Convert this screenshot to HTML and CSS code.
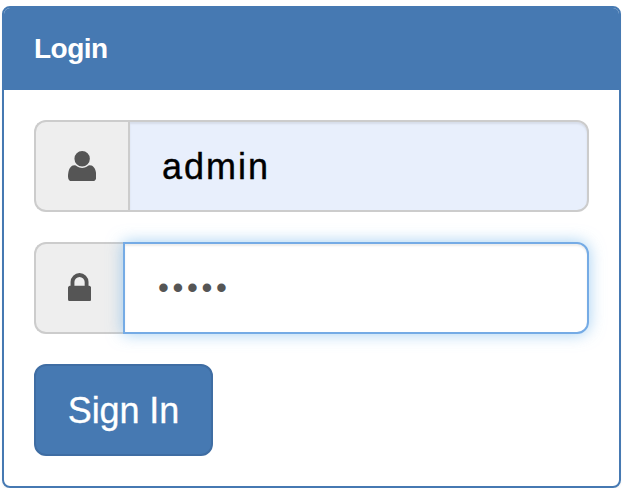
FILE: index.html
```html
<!DOCTYPE html>
<html lang="en">
<head>
<meta charset="utf-8">
<title>Login</title>
<link rel="stylesheet" href="styles.css">
</head>
<body>
<main class="panel">
  <h1 class="panel-heading">Login</h1>
  <form class="panel-body">
    <div class="input-group">
      <span class="addon">
        <svg class="icon-user" viewBox="0 0 1408 1536" aria-hidden="true"><g transform="translate(0 1408) scale(1 -1)"><path d="M1408 131q0 -120 -73 -189.500t-194 -69.500h-874q-121 0 -194 69.500t-73 189.500q0 53 3.500 103.500t14 109t26.500 108.500t43 97.500t62 81t85.500 53.500t111.500 20q9 0 42 -21.500t74.500 -48t108 -48t133.500 -21.500t133.500 21.500t108 48t74.500 48t42 21.500q61 0 111.500 -20t85.500 -53.500t62 -81t43 -97.500t26.500 -108.500t14 -109t3.500 -103.500zM1088 1024q0 -159 -112.500 -271.500t-271.500 -112.500t-271.500 112.500t-112.500 271.500t112.500 271.500t271.500 112.500t271.500 -112.500t112.500 -271.500z"/></g></svg>
      </span>
      <div class="field field-filled"><span class="username">admin</span></div>
    </div>
    <div class="input-group">
      <span class="addon addon-lock">
        <svg class="icon-lock" viewBox="0 0 1152 1408" aria-hidden="true"><g transform="translate(0 1408) scale(1 -1)"><path d="M320 768h512v192q0 106 -75 181t-181 75t-181 -75t-75 -181v-192zM1152 672v-576q0 -40 -28 -68t-68 -28h-960q-40 0 -68 28t-28 68v576q0 40 28 68t68 28h32v192q0 184 132 316t316 132t316 -132t132 -316v-192h32q40 0 68 -28t28 -68z"/></g></svg>
      </span>
      <div class="field field-focus"><span class="password">•••••</span></div>
    </div>
    <button class="submit" type="button">Sign In</button>
  </form>
</main>
</body>
</html>
```
FILE: styles.css
```css
* { box-sizing: border-box; }

body {
  margin: 0;
  padding: 6px 3px 0 2px;
  background: #fff;
  font-family: "Liberation Sans", Arial, sans-serif;
}

.panel {
  height: 482px;
  border: 2px solid #4679b2;
  border-radius: 8px;
  box-shadow: 0 2px 2px rgba(0, 0, 0, .05);
}

.panel-heading {
  margin: 0;
  height: 82px;
  padding: 0 30px;
  border-radius: 6px 6px 0 0;
  background: #4679b2;
  color: #fff;
  font-size: 28px;
  font-weight: bold;
  letter-spacing: -.5px;
  line-height: 82px;
}

.panel-body {
  display: flex;
  flex-direction: column;
  align-items: flex-start;
  gap: 30px;
  padding: 30px;
}

.input-group {
  display: flex;
  width: 555px;
  height: 92px;
}

.addon {
  display: flex;
  align-items: center;
  width: 94px;
  padding-left: 32px;
  border: 2px solid #ccc;
  border-right: 0;
  border-radius: 12px 0 0 12px;
  background: #eee;
}

.addon-lock { width: 89px; }

.addon svg {
  display: block;
  fill: #555;
}

.icon-user { width: 28.3px; height: 30.9px; }

.icon-lock { width: 23.1px; height: 28.3px; margin-top: -2px; }

.field {
  display: flex;
  align-items: center;
  flex: 1;
  padding: 0 32px;
  border: 2px solid #ccc;
  border-radius: 0 12px 12px 0;
  background: #fff;
  box-shadow: inset 0 2px 2px rgba(0, 0, 0, .075);
  font-size: 36px;
}

.field-filled { background: #e8effc; }

.field-focus {
  border-color: #75abe5;
  box-shadow: inset 0 2px 2px rgba(0, 0, 0, .075), 0 0 16px rgba(102, 175, 233, .6);
}

.username {
  padding-top: 2px;
  color: #000;
  letter-spacing: 2px;
  -webkit-text-stroke: .4px #000;
}

.password {
  padding-left: 1px;
  color: #555;
  font-size: 31px;
  letter-spacing: 3.65px;
}

.submit {
  width: 179px;
  height: 92px;
  padding: 2px 0 0;
  border: 2px solid #3f6da3;
  border-radius: 12px;
  background: #4679b2;
  color: #fff;
  font: 36px "Liberation Sans", Arial, sans-serif;
  letter-spacing: -.1px;
  -webkit-text-stroke: .3px #fff;
}
```
